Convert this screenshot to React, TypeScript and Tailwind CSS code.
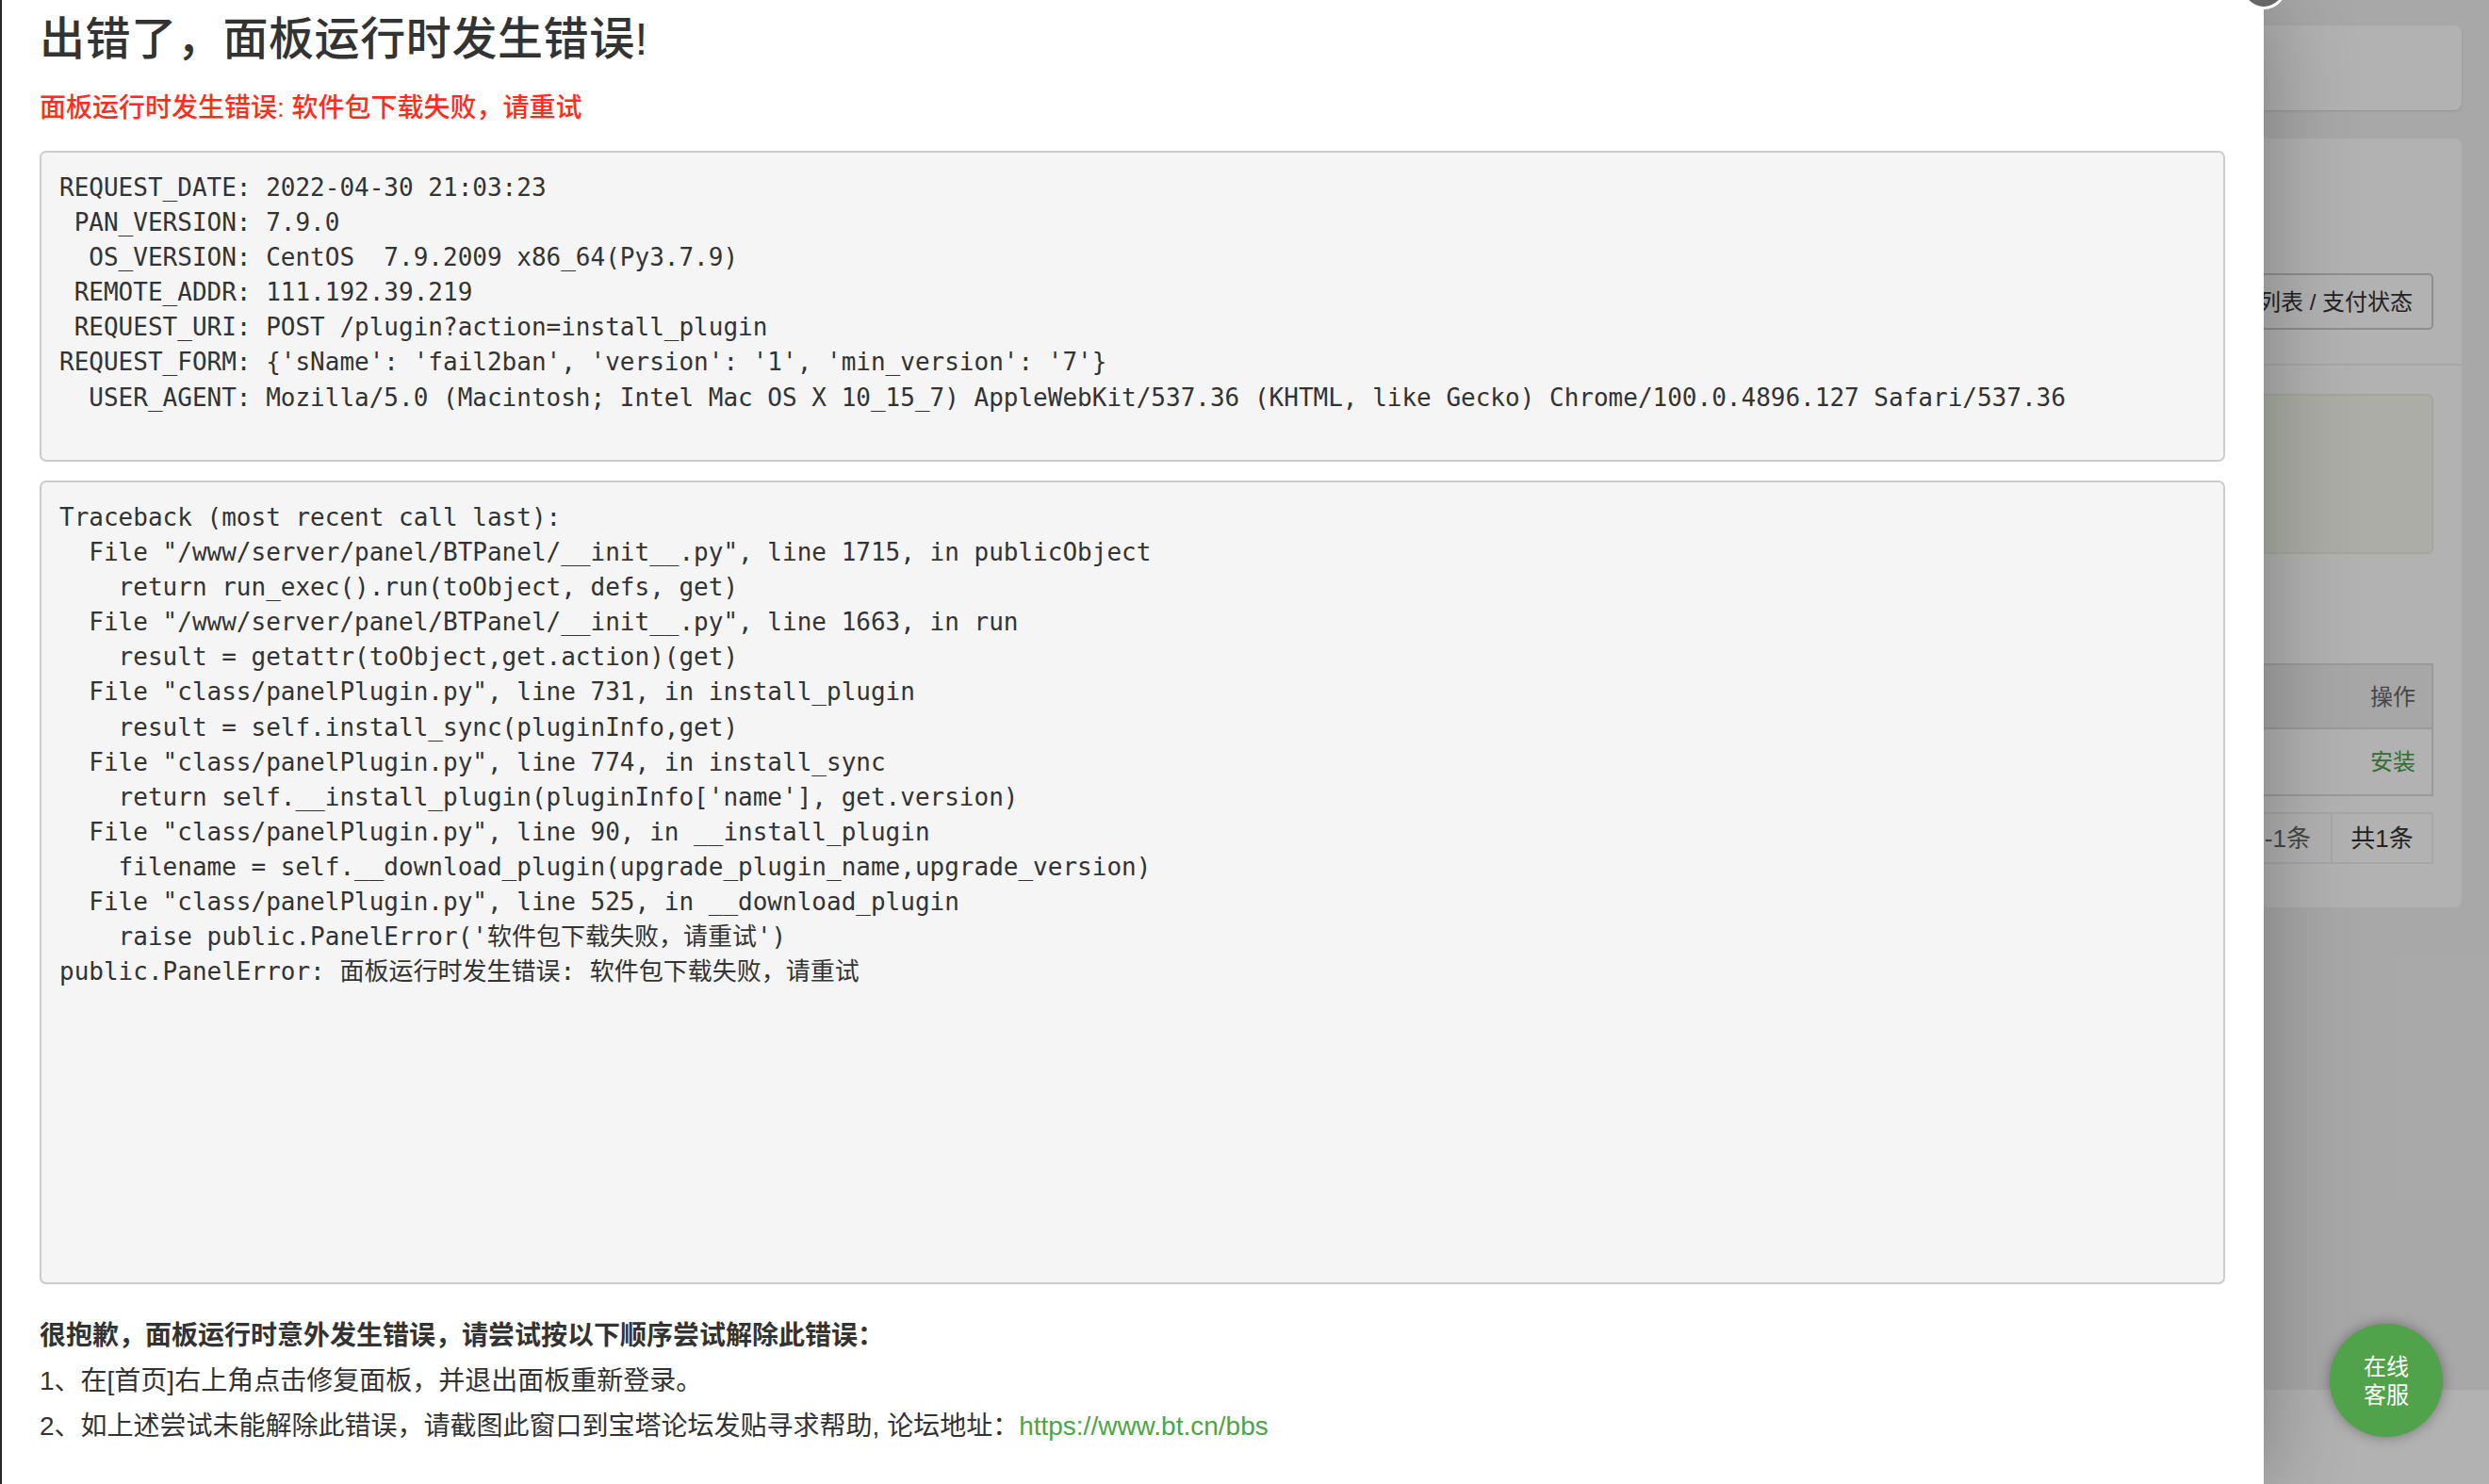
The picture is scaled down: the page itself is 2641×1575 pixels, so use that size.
const ENV_INFO = `REQUEST_DATE: 2022-04-30 21:03:23
 PAN_VERSION: 7.9.0
  OS_VERSION: CentOS  7.9.2009 x86_64(Py3.7.9)
 REMOTE_ADDR: 111.192.39.219
 REQUEST_URI: POST /plugin?action=install_plugin
REQUEST_FORM: {'sName': 'fail2ban', 'version': '1', 'min_version': '7'}
  USER_AGENT: Mozilla/5.0 (Macintosh; Intel Mac OS X 10_15_7) AppleWebKit/537.36 (KHTML, like Gecko) Chrome/100.0.4896.127 Safari/537.36`;

const TRACEBACK = `Traceback (most recent call last):
  File "/www/server/panel/BTPanel/__init__.py", line 1715, in publicObject
    return run_exec().run(toObject, defs, get)
  File "/www/server/panel/BTPanel/__init__.py", line 1663, in run
    result = getattr(toObject,get.action)(get)
  File "class/panelPlugin.py", line 731, in install_plugin
    result = self.install_sync(pluginInfo,get)
  File "class/panelPlugin.py", line 774, in install_sync
    return self.__install_plugin(pluginInfo['name'], get.version)
  File "class/panelPlugin.py", line 90, in __install_plugin
    filename = self.__download_plugin(upgrade_plugin_name,upgrade_version)
  File "class/panelPlugin.py", line 525, in __download_plugin
    raise public.PanelError('软件包下载失败，请重试')
public.PanelError: 面板运行时发生错误: 软件包下载失败，请重试`;

function CodeBox({ text, height }: { text: string; height: string }) {
  return (
    <pre
      className={`${height} overflow-hidden rounded-[7px] border-2 border-[#cccccc] bg-[#f5f5f5] px-[19px] py-[19px] font-['DejaVu_Sans_Mono','Noto_Sans_CJK_SC',monospace] text-[26px] leading-[37.1px] text-[#333333]`}
    >
      {text}
    </pre>
  );
}

function BackgroundPage() {
  return (
    <div className="flex h-full flex-col bg-[#f1f1f1]">
      <div className="flex flex-1 flex-col gap-[30px] pr-[29px] pt-[27px]">
        <div className="h-[90px] rounded-[8px] bg-white shadow-sm" />
        <div className="h-[816px] rounded-[8px] bg-white">
          <div className="flex h-[241px] items-end justify-end border-b-2 border-[#eeeeee] px-[30px] pb-[36px]">
            <div className="flex h-[60px] w-[400px] items-center justify-end rounded-[5px] border-2 border-[#cccccc] pr-[20px] pt-[2px] text-[24px] text-[#333333]">
              插件列表 / 支付状态
            </div>
          </div>
          <div className="px-[30px] pt-[30px]">
            <div className="h-[170px] rounded-[6px] border-2 border-[#eaefdf] bg-[#f5f8ee]" />
            <div className="mt-[116px] border-2 border-[#dddddd] text-[24px]">
              <div className="flex h-[68px] items-center justify-end border-b-2 border-[#dddddd] bg-[#f0f0f0] pr-[17px] pt-[2px] text-[#666666]">
                操作
              </div>
              <div className="flex h-[69px] items-center justify-end pr-[17px] text-[#4a9e4a]">安装</div>
            </div>
            <div className="mt-[17px] flex justify-end text-[26px]">
              <div className="flex h-[55px] w-[400px] items-center justify-end border-2 border-r-0 border-[#eeeeee] pr-[21px] pt-[2px] text-[#666666]">
                1-1条
              </div>
              <div className="flex h-[55px] w-[109px] items-center justify-center border-2 border-[#eeeeee] pt-[2px] text-[#333333]">
                共1条
              </div>
            </div>
          </div>
        </div>
      </div>
      <div className="h-[100px] bg-white" />
    </div>
  );
}

export default function App() {
  return (
    <div className="relative h-[1575px] w-[2641px] overflow-hidden font-['Liberation_Sans','Noto_Sans_CJK_SC',sans-serif]">
      <BackgroundPage />
      <div className="absolute inset-0 bg-black/30" />

      {/* error layer */}
      <div className="absolute bottom-0 left-0 top-0 w-[2402px] border-l-2 border-[#23262b] bg-white px-[40px] shadow-[0_0_90px_rgba(0,0,0,0.3)]">
        <h1 className="pt-[12px] text-[48px] font-medium leading-[60px] tracking-[0.6px] text-[#333333]">出错了，面板运行时发生错误!</h1>
        <p className="mt-[23px] text-[28px] font-medium leading-[40px] text-[#ff2d20]">面板运行时发生错误: 软件包下载失败，请重试</p>
        <div className="mt-[25px] flex w-[2319px] flex-col gap-[20px]">
          <CodeBox text={ENV_INFO} height="h-[330px]" />
          <CodeBox text={TRACEBACK} height="h-[853px]" />
        </div>
        <div className="mt-[31px] text-[28px] leading-[48px] text-[#333333]">
          <div className="font-bold">很抱歉，面板运行时意外发生错误，请尝试按以下顺序尝试解除此错误：</div>
          <div>1、在[首页]右上角点击修复面板，并退出面板重新登录。</div>
          <div>
            2、如上述尝试未能解除此错误，请截图此窗口到宝塔论坛发贴寻求帮助, 论坛地址：
            <a className="text-[#4da548]">https://www.bt.cn/bbs</a>
          </div>
        </div>
      </div>

      {/* close button, mostly off the top edge */}
      <div className="absolute left-[2378px] top-[-38px] h-[48px] w-[48px] rounded-full border-[3px] border-white bg-[#666666]" />

      <div className="absolute left-[2472px] top-[1405px] flex h-[120px] w-[120px] items-center justify-center rounded-full bg-[#50a34a] pt-[2px] text-center text-[24px] leading-[30px] text-white shadow-[0_0_14px_rgba(0,0,0,0.35)]">
        在线
        <br />
        客服
      </div>
    </div>
  );
}
